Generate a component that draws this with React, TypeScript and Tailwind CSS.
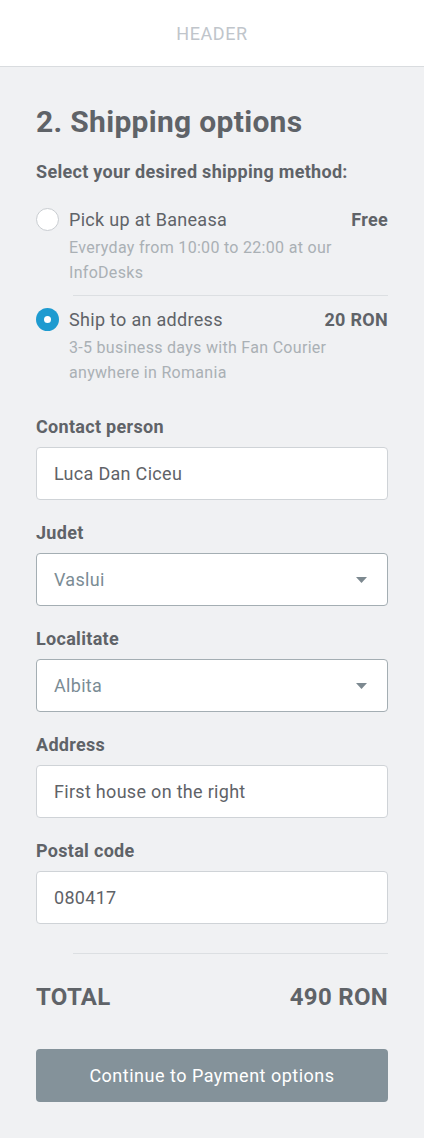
import React from 'react';

const font = { fontFamily: 'Roboto, "Noto Sans", sans-serif' };

interface OptionProps {
  title: string;
  price: string;
  lines: string[];
  selected?: boolean;
}

const ShippingOption: React.FC<OptionProps> = ({ title, price, lines, selected }) => (
  <div>
    <div className="flex items-center h-[28px]">
      {selected ? (
        <span className="w-[23px] h-[23px] rounded-full bg-[#1e9bd0] flex items-center justify-center shrink-0">
          <span className="w-[7px] h-[7px] rounded-full bg-white" />
        </span>
      ) : (
        <span className="w-[23px] h-[23px] rounded-full bg-white border border-[#c9cdd1] shrink-0" />
      )}
      <span className="ml-[10px] text-[18px] text-[#5f6368] flex-1">{title}</span>
      <span className="text-[18px] font-bold text-[#5f6368]">{price}</span>
    </div>
    <div className="ml-[33px] mt-[2px] text-[16px] leading-[25px] text-[#aab0b5]">
      {lines.map((l) => (
        <div key={l}>{l}</div>
      ))}
    </div>
  </div>
);

const Field: React.FC<{ label: string; value: string; select?: boolean }> = ({ label, value, select }) => (
  <div>
    <div className="text-[18px] leading-[24px] font-bold text-[#5f6368] mb-[8px]">{label}</div>
    {select ? (
      <div className="h-[53px] bg-white border-[1.5px] border-[#a4aeb3] rounded-[4px] flex items-center pl-[17px] pr-[20px]">
        <span className="flex-1 text-[18px] text-[#7b8c95]">{value}</span>
        <svg width="11" height="6" viewBox="0 0 11 6">
          <path d="M0 0h11L5.5 6z" fill="#7d8990" />
        </svg>
      </div>
    ) : (
      <div className="h-[53px] bg-white border-[1.5px] border-[#cfd3d7] rounded-[4px] flex items-center pl-[17px]">
        <span className="text-[18px] text-[#5f6368]">{value}</span>
      </div>
    )}
  </div>
);

export default function App() {
  return (
    <div className="min-h-screen bg-[#f0f1f3] tracking-[0.3px]" style={font}>
      <header className="h-[67px] bg-white border-b border-[#d9dcdf] flex items-center justify-center">
        <span className="text-[18px] text-[#c0c5cb] tracking-[0.6px]">HEADER</span>
      </header>

      <main className="px-[36px] pt-[37px] pb-[36px]">
        <h1 className="text-[30px] leading-[36px] font-bold text-[#5f6368]">2. Shipping options</h1>
        <p className="mt-[20px] text-[18px] leading-[24px] font-bold text-[#5f6368]">
          Select your desired shipping method:
        </p>

        <div className="mt-[21px]">
          <ShippingOption
            title="Pick up at Baneasa"
            price="Free"
            lines={['Everyday from 10:00 to 22:00 at our', 'InfoDesks']}
          />
          <div className="ml-[37px] mt-[10px] h-px bg-[#dcdfe2]" />
          <div className="mt-[9px]">
            <ShippingOption
              selected
              title="Ship to an address"
              price="20 RON"
              lines={['3-5 business days with Fan Courier', 'anywhere in Romania']}
            />
          </div>
        </div>

        <div className="mt-[30px] flex flex-col gap-[21px]">
          <Field label="Contact person" value="Luca Dan Ciceu" />
          <Field label="Judet" value="Vaslui" select />
          <Field label="Localitate" value="Albita" select />
          <Field label="Address" value="First house on the right" />
          <Field label="Postal code" value="080417" />
        </div>

        <div className="ml-[37px] mt-[29px] h-px bg-[#dcdfe2]" />

        <div className="mt-[28px] flex items-center justify-between h-[30px]">
          <span className="text-[24px] font-bold text-[#5f6368]">TOTAL</span>
          <span className="text-[24px] font-bold text-[#5f6368]">490 RON</span>
        </div>

        <button className="mt-[37px] w-full h-[53px] rounded-[4px] bg-[#84929a] text-white text-[18px] tracking-[0.5px]">
          Continue to Payment options
        </button>
      </main>
    </div>
  );
}
